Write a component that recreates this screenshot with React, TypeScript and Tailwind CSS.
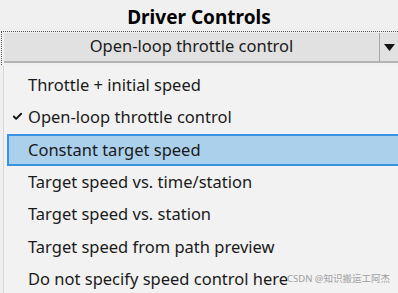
import { Check } from "lucide-react";

const items = [
  "Throttle + initial speed",
  "Open-loop throttle control",
  "Constant target speed",
  "Target speed vs. time/station",
  "Target speed vs. station",
  "Target speed from path preview",
  "Do not specify speed control here",
];

export default function App() {
  return (
    <div className="w-[398px] h-[293px] overflow-hidden bg-[#f0f0f0] text-[#1a1a1a] font-['Noto_Sans',sans-serif] relative">
      {/* Title */}
      <div className="h-[31px] flex items-center justify-center pt-[3px] text-[19px] font-bold text-black">
        Driver Controls
      </div>

      {/* Focused combo box */}
      <div className="ml-[1px] border-t border-l border-dotted border-[#555] pt-[1px] pl-[2px] pb-[2px]">
        <div className="h-[30px] flex bg-[#e1e1e1] border-b-2 border-[#b4b4b4]">
          <div className="flex-1 flex items-center justify-center text-[16.5px] pb-[1px]">
            Open-loop throttle control
          </div>
          <div className="w-[19px] border-l border-[#a8a8a8] flex items-center justify-center">
            <svg width="11" height="7" viewBox="0 0 11 7">
              <path d="M0 0 H11 L5.5 7 Z" fill="#111" />
            </svg>
          </div>
        </div>
      </div>

      {/* Dropdown list */}
      <div className="ml-[3px] mt-[1px] border-l border-[#d8d8d8] bg-[#f2f2f2] pt-[3px]">
        {items.map((t, i) => (
          <div
            key={t}
            className={
              i === 2
                ? "h-[32.4px] ml-[3px] flex items-center pl-[19px] bg-[#abd0ec] border-y-2 border-l-2 border-[#3a92e3] text-[16.5px]"
                : "h-[32.4px] ml-[3px] flex items-center pl-[21px] text-[16.5px] relative"
            }
          >
            {i === 1 && (
              <Check className="absolute left-[5px] top-[10px] w-[11px] h-[11px]" strokeWidth={4} color="#111" />
            )}
            {t}
          </div>
        ))}
      </div>

      <div className="absolute left-[287px] top-[272px] text-[9.5px] text-[#a0a0a0] whitespace-nowrap font-['Noto_Sans','Noto_Sans_CJK_SC',sans-serif]">
        CSDN @知识搬运工阿杰
      </div>
    </div>
  );
}
